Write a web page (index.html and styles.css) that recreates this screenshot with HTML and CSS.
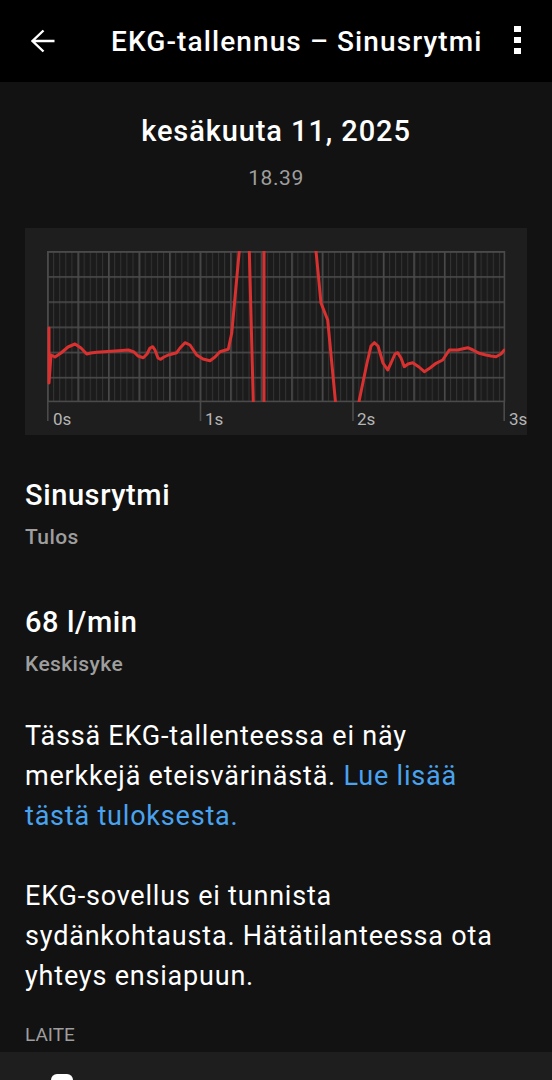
FILE: index.html
```html
<!DOCTYPE html>
<html>
<head>
    <title>EKG-tallennus</title>
    <link rel="stylesheet" href="styles.css">
</head>
<body>
    <header class="app-bar">
        <svg class="back-btn" width="24" height="24" viewBox="0 0 24 24">
            <path d="M23.5 12H1.5M12.5 1.5L1.5 12L12.5 22.5" fill="none" stroke="#fff" stroke-width="2.4"/>
        </svg>
        <h1 class="app-title">EKG-tallennus – Sinusrytmi</h1>
        <svg class="menu-btn" width="7" height="28" viewBox="0 0 7 28">
            <rect x="0" y="0" width="7" height="6" fill="#fff"/>
            <rect x="0" y="11" width="7" height="6" fill="#fff"/>
            <rect x="0" y="22" width="7" height="6" fill="#fff"/>
        </svg>
    </header>

    <main class="content">
        <div class="date-block">
            <div class="date">kesäkuuta 11, 2025</div>
            <div class="time">18.39</div>
        </div>

        <div class="chart-card">
            <svg class="ecg" width="502" height="207" viewBox="0 0 502 207">
                <defs>
                    <pattern id="minor" x="22" y="0" width="6.1067" height="207" patternUnits="userSpaceOnUse">
                        <rect x="0" y="0" width="1" height="207" fill="#333"/>
                    </pattern>
                    <pattern id="major" x="22" y="0" width="30.533" height="207" patternUnits="userSpaceOnUse">
                        <rect x="0" y="0" width="1.6" height="207" fill="#4a4a4a"/>
                    </pattern>
                    <pattern id="rows" x="0" y="23" width="502" height="25.167" patternUnits="userSpaceOnUse">
                        <rect x="0" y="0" width="502" height="1.6" fill="#4a4a4a"/>
                    </pattern>
                    <clipPath id="plot">
                        <rect x="22" y="23" width="458" height="151"/>
                    </clipPath>
                </defs>

                <!-- grid -->
                <rect x="22" y="23" width="458" height="151" fill="#1b1b1b"/>
                <rect x="22" y="23" width="458" height="151" fill="url(#minor)"/>
                <rect x="22" y="23" width="458" height="151" fill="url(#major)"/>
                <rect x="22" y="23" width="458" height="151" fill="url(#rows)"/>
                <rect x="22.8" y="23.8" width="456.6" height="149.6" fill="none" stroke="#4a4a4a" stroke-width="1.6"/>

                <!-- second ticks -->
                <line x1="22.8" y1="174" x2="22.8" y2="193" stroke="#4a4a4a" stroke-width="1.6"/>
                <line x1="175.5" y1="174" x2="175.5" y2="193" stroke="#4a4a4a" stroke-width="1.6"/>
                <line x1="328" y1="174" x2="328" y2="193" stroke="#4a4a4a" stroke-width="1.6"/>
                <line x1="479.2" y1="174" x2="479.2" y2="193" stroke="#4a4a4a" stroke-width="1.6"/>

                <text class="axis-label" x="28" y="197">0s</text>
                <text class="axis-label" x="180" y="197">1s</text>
                <text class="axis-label" x="332" y="197">2s</text>
                <text class="axis-label" x="484" y="197">3s</text>

                <!-- trace -->
                <path clip-path="url(#plot)" fill="none" stroke="#d93030" stroke-width="3" stroke-linejoin="round" stroke-linecap="round"
                    d="M24 100 L24 155 L26 127 L30 129 L36 125 L43 119 L50 116 L56 120 L61.7 126 L66 125 L71.7 124.3 L90 123 L103.3 122 L109 124 L113 128 L118.3 129.7 L122 126 L125 120 L127.7 118.7 L130 122 L133 130 L135.7 131.3 L139 129 L143.3 127 L151.7 124.7 L155 120 L160 114.7 L165 117 L171.7 127 L178 131 L185 132.7 L190 129 L195 123.7 L203.3 121.3 L206.7 105.3 L214.3 22.7 L219 -78 L224.3 23 L228.3 174 L233 272 L239 174 L239 23 L265 -128 L291 23 L296 75 L302.7 92 L310.3 172 L320 272 L334.3 172 L342 135 L346 118 L349.3 114.7 L353 118 L358 135 L362.7 142 L366 135 L370 126 L372.7 124.7 L376 130 L379.3 138.7 L383 136 L387.7 134.7 L394 139 L399.3 143.7 L405 140 L411 135.3 L417.7 132 L421 127 L424.3 122 L432.7 122 L437 121 L442.7 119.7 L448 122 L454.3 125.3 L461 127 L466 128 L471 128.7 L476 126 L479.3 122"/>
            </svg>
        </div>

        <section class="stat first">
            <div class="stat-value">Sinusrytmi</div>
            <div class="stat-label">Tulos</div>
        </section>

        <section class="stat">
            <div class="stat-value">68 l/min</div>
            <div class="stat-label">Keskisyke</div>
        </section>

        <p class="note">Tässä EKG-tallenteessa ei näy merkkejä eteisvärinästä. <a class="link" href="#">Lue lisää tästä tuloksesta.</a></p>

        <p class="note">EKG-sovellus ei tunnista sydänkohtausta. Hätätilanteessa ota yhteys ensiapuun.</p>

        <h3 class="section-label">LAITE</h3>
    </main>

    <div class="device-row">
        <svg class="device-icon" width="24" height="30" viewBox="0 0 24 30">
            <rect x="1" y="0" width="22" height="40" rx="6" fill="#fff"/>
        </svg>
    </div>
</body>
</html>
```

FILE: styles.css
```css
body {
    margin: 0;
    background-color: #121212;
    font-family: Roboto, "Noto Sans", sans-serif;
    color: #fff;
}

.app-bar {
    height: 82px;
    background-color: #000;
    display: flex;
    align-items: center;
    padding: 0 31px 0 31px;
}

.app-title {
    flex: 1;
    margin: 0 0 0 56px;
    font-size: 28px;
    font-weight: 500;
    letter-spacing: 1.1px;
    white-space: nowrap;
}

.menu-btn {
    margin-top: -2px;
}

.content {
    padding: 31px 25px 0;
}

.date-block {
    text-align: center;
}

.date {
    font-size: 29px;
    line-height: 36px;
    font-weight: 500;
    letter-spacing: 0.9px;
}

.time {
    margin-top: 15px;
    font-size: 21px;
    line-height: 28px;
    letter-spacing: 0.6px;
    color: #9e9e9e;
}

.chart-card {
    margin-top: 36px;
    height: 207px;
    background-color: #1e1e1e;
}

.ecg {
    display: block;
}

.axis-label {
    font-family: Roboto, sans-serif;
    font-size: 17px;
    fill: #b5b5b5;
}

/* result + heart rate */
.stat {
    margin-top: 53px;
}

.stat.first {
    margin-top: 42px;
}

.stat-value {
    font-size: 29px;
    line-height: 36px;
    font-weight: 500;
    letter-spacing: 0.6px;
}

.stat-label {
    margin-top: 10px;
    font-size: 21px;
    line-height: 28px;
    font-weight: 500;
    letter-spacing: 0.4px;
    color: #9e9e9e;
}

.note {
    margin: 38px 0 0;
    font-size: 27px;
    line-height: 40px;
    letter-spacing: 0.8px;
}

.note + .note {
    margin-top: 40px;
}

.link {
    color: #4aa3ee;
    text-decoration: none;
}

.section-label {
    margin: 27px 0 5px;
    font-size: 19px;
    line-height: 24px;
    font-weight: 400;
    color: #9e9e9e;
}

.device-row {
    height: 80px;
    padding: 22px 0 0 50px;
    background-color: #1e1e1e;
    box-sizing: border-box;
}

.device-icon {
    display: block;
}
```
